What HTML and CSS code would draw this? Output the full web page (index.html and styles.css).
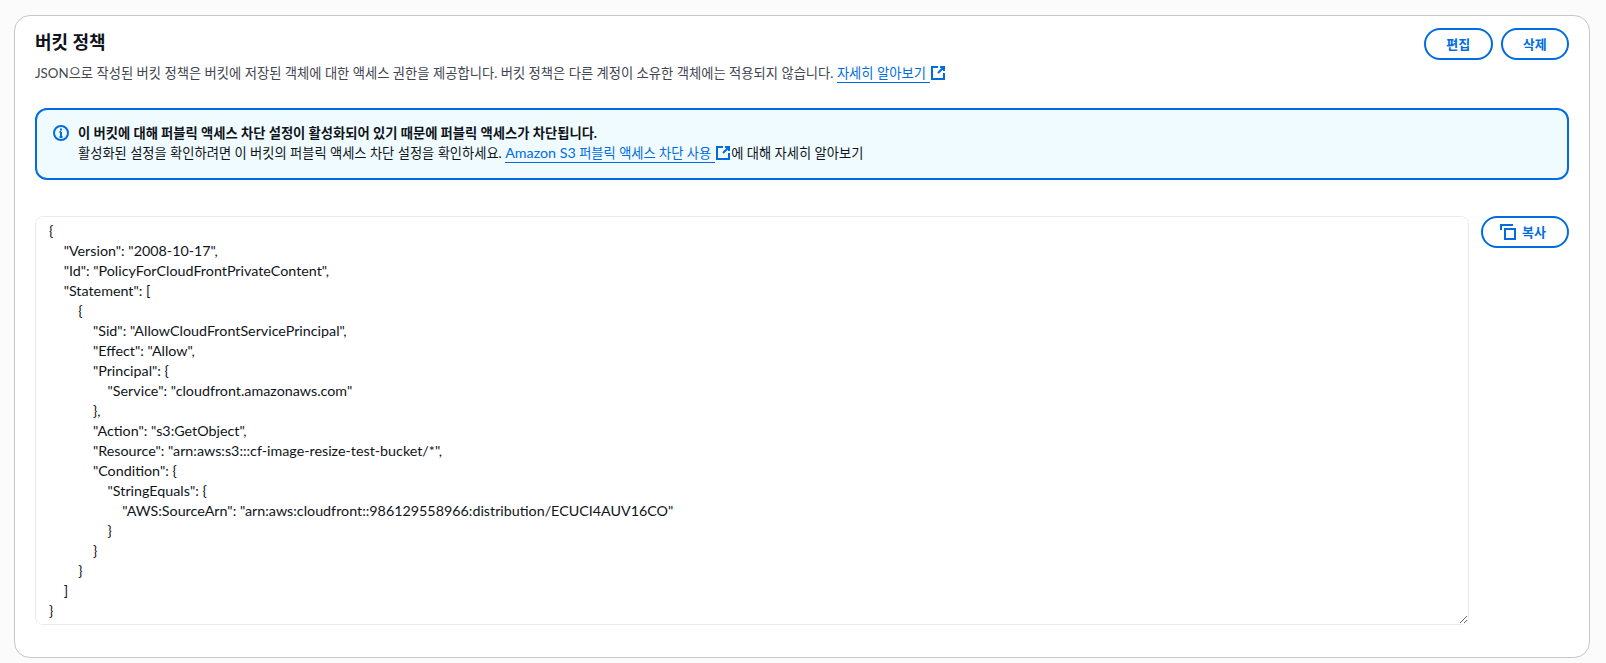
FILE: index.html
```html
<!DOCTYPE html>
<html lang="ko">
<head>
<meta charset="utf-8">
<title>버킷 정책</title>
<link rel="stylesheet" href="styles.css">
</head>
<body>
<section class="card">
  <header class="head">
    <div class="head-text">
      <h2 class="title">버킷 정책</h2>
      <p class="desc">JSON으로 작성된 버킷 정책은 버킷에 저장된 객체에 대한 액세스 권한을 제공합니다. 버킷 정책은 다른 계정이 소유한 객체에는 적용되지 않습니다. <a class="link" href="#">자세히 알아보기<span class="gap"> </span></a><svg class="ext" viewBox="0 0 16 16"><path d="M8 2H2v12h12V8M10 2h4v4M14 2 8 8"/></svg></p>
    </div>
    <div class="actions">
      <button class="btn btn-head">편집</button>
      <button class="btn btn-head">삭제</button>
    </div>
  </header>
  <div class="alert">
    <svg class="info" viewBox="0 0 16 16"><circle cx="8" cy="8" r="7"/><path d="M8 7v5M6.5 12h3M6.5 7H8"/><path class="dot" d="M7 3.5h2v2H7z"/></svg>
    <div class="alert-text">
      <strong class="alert-title">이 버킷에 대해 퍼블릭 액세스 차단 설정이 활성화되어 있기 때문에 퍼블릭 액세스가 차단됩니다.</strong>
      <div>활성화된 설정을 확인하려면 이 버킷의 퍼블릭 액세스 차단 설정을 확인하세요. <a class="link" href="#"><span class="latin">Amazon S3</span> 퍼블릭 액세스 차단 사용<span class="gap"> </span></a><svg class="ext" viewBox="0 0 16 16"><path d="M8 2H2v12h12V8M10 2h4v4M14 2 8 8"/></svg>에 대해 자세히 알아보기</div>
    </div>
  </div>
  <div class="policy">
    <div class="code">{
    "Version": "2008-10-17",
    "Id": "PolicyForCloudFrontPrivateContent",
    "Statement": [
        {
            "Sid": "AllowCloudFrontServicePrincipal",
            "Effect": "Allow",
            "Principal": {
                "Service": "cloudfront.amazonaws.com"
            },
            "Action": "s3:GetObject",
            "Resource": "arn:aws:s3:::cf-image-resize-test-bucket/*",
            "Condition": {
                "StringEquals": {
                    "AWS:SourceArn": "arn:aws:cloudfront::986129558966:distribution/ECUCI4AUV16CO"
                }
            }
        }
    ]
}</div>
    <button class="btn btn-copy"><svg class="copy" viewBox="0 0 16 16"><path d="M1 6V1h12"/><path d="M5 5h10v10H5z"/></svg>복사</button>
  </div>
</section>
</body>
</html>
```

FILE: styles.css
```css
* { box-sizing: border-box; }
body {
  margin: 0;
  padding: 15px 16px 0 14px;
  background: #fbfbfb;
  color: #0f141a;
  font-family: "Lato", "Noto Sans CJK KR", sans-serif;
  font-size: 13.25px;
  line-height: 20px;
}
.card {
  height: 643px;
  padding: 12px 20px 20px 20px;
  background: #fff;
  border: 1px solid #c6c6cd;
  border-radius: 16px;
}
.head { display: flex; justify-content: space-between; align-items: flex-start; }
.title { margin: 1px 0 0; font-size: 18px; line-height: 26px; font-weight: 700; }
.desc { margin: 8px 0 0; color: #424650; font-size: 13.3px; }
.link { color: #006ce0; text-decoration: none; border-bottom: 1px solid #006ce0; padding-bottom: 1px; }
.latin { font-size: 14.3px; line-height: 18px; }
.gap { display: inline-block; width: 4px; }
.ext { width: 16px; height: 16px; vertical-align: -3px; fill: none; stroke: #006ce0; stroke-width: 2; }
.actions { display: flex; gap: 8px; }
.btn {
  height: 32px;
  padding: 0 20px;
  background: #fff;
  color: #006ce0;
  border: 2px solid #006ce0;
  border-radius: 20px;
  font: 700 13px/20px "Lato", "Noto Sans CJK KR", sans-serif;
}
.btn-head { width: 68.5px; padding: 0; }
.alert {
  display: flex;
  gap: 9px;
  height: 72px;
  margin-top: 25px;
  padding: 13px 16px;
  background: #f0fbff;
  border: 2px solid #006ce0;
  border-radius: 12px;
}
.info { flex: none; width: 16px; height: 16px; margin-top: 2px; fill: none; stroke: #006ce0; stroke-width: 2; }
.info .dot { fill: #006ce0; stroke: none; }
.alert-title { display: block; font-weight: 700; font-size: 13.3px; }
.policy { display: flex; align-items: flex-start; gap: 12px; margin-top: 36px; }
.code {
  flex: 1;
  height: 409px;
  padding: 4px 13px;
  background: #fff;
  border: 1px solid #e8eaec;
  border-radius: 8px;
  font-size: 14.3px;
  line-height: 20px;
  white-space: pre;
  overflow: auto;
  resize: both;
}
.btn-copy {
  flex: none;
  display: flex;
  align-items: center;
  justify-content: center;
  gap: 6px;
  width: 88px;
  padding: 0 4px 0 0;
}
.copy { width: 16px; height: 16px; fill: none; stroke: #006ce0; stroke-width: 2; }
```
